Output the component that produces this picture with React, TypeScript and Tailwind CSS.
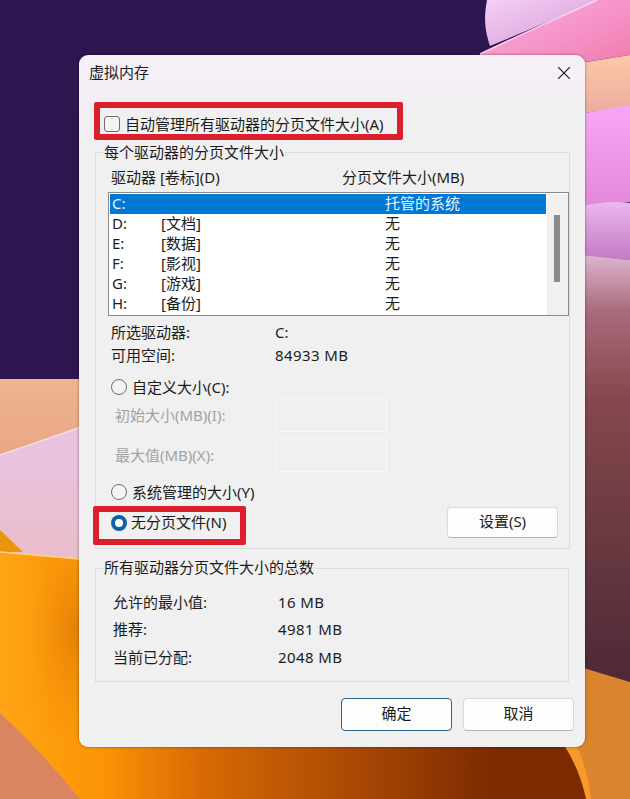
function Wallpaper() {
  return (
    <svg className="absolute inset-0" width="630" height="799" viewBox="0 0 630 799">
      <defs>
        <linearGradient id="peach" x1="0" y1="0" x2="0" y2="1">
          <stop offset="0" stopColor="#f0b48e" />
          <stop offset="1" stopColor="#df9078" />
        </linearGradient>
        <linearGradient id="lav" x1="0" y1="0" x2="0" y2="1">
          <stop offset="0" stopColor="#e8c4e4" />
          <stop offset="1" stopColor="#eabcc8" />
        </linearGradient>
        <linearGradient id="orange" x1="0" y1="0" x2="1" y2="0">
          <stop offset="0" stopColor="#ffa416" />
          <stop offset="0.16" stopColor="#fb9505" />
          <stop offset="0.32" stopColor="#d86a04" />
          <stop offset="0.555" stopColor="#ab4a05" />
          <stop offset="0.78" stopColor="#7c2b00" />
          <stop offset="1" stopColor="#7c2b00" />
        </linearGradient>
        <radialGradient id="orangeL" cx="0.9" cy="0.42" r="0.7">
          <stop offset="0" stopColor="#e27e06" stopOpacity="0.9" />
          <stop offset="1" stopColor="#fb9505" stopOpacity="0" />
        </radialGradient>
        <linearGradient id="petal" x1="0" y1="0" x2="1" y2="1">
          <stop offset="0" stopColor="#f4d0f4" />
          <stop offset="1" stopColor="#d596d8" />
        </linearGradient>
        <linearGradient id="pink" x1="0" y1="0" x2="1" y2="1">
          <stop offset="0" stopColor="#fbb0dc" />
          <stop offset="0.6" stopColor="#f590c4" />
          <stop offset="1" stopColor="#ee78a8" />
        </linearGradient>
        <linearGradient id="peachR" x1="0" y1="0" x2="0" y2="1">
          <stop offset="0" stopColor="#fcc9a8" />
          <stop offset="1" stopColor="#eeaaa0" />
        </linearGradient>
        <linearGradient id="magenta" x1="0" y1="0" x2="0" y2="1">
          <stop offset="0" stopColor="#f8a6f8" />
          <stop offset="1" stopColor="#e488d8" />
        </linearGradient>
        <linearGradient id="lilac" x1="0" y1="0" x2="0" y2="1">
          <stop offset="0" stopColor="#eab8ee" />
          <stop offset="1" stopColor="#c478c4" />
        </linearGradient>
        <linearGradient id="wine" x1="0" y1="0" x2="0" y2="1">
          <stop offset="0" stopColor="#dcb6d0" />
          <stop offset="0.13" stopColor="#a96a7c" />
          <stop offset="0.33" stopColor="#85484c" />
          <stop offset="1" stopColor="#4c2835" />
        </linearGradient>
      </defs>
      <rect width="630" height="799" fill="#2d1650" />
      <path d="M0 379H90V570H0Z" fill="url(#peach)" />
      <path d="M0 455L90 424V570H0Z" fill="url(#lav)" />
      <path d="M0 455L90 424" stroke="#f6dcdc" strokeWidth="1.5" />
      <path d="M0 530L23 552H0Z" fill="#e9950f" />
      <path d="M0 552L90 560H630V799H0Z" fill="url(#orange)" />
      <path d="M0 552L85 560V740H0Z" fill="url(#orangeL)" />
      <path d="M0 552L90 560" stroke="#fdd27a" strokeWidth="1.5" />
      <path d="M0 713Q40 750 80 799H0Z" fill="#d98560" />
      <path d="M487 0C483 20 486 35 490 46L600 0Z" fill="url(#petal)" />
      <path d="M480 54C530 30 565 15 597 0H630V55L585 62V70H480Z" fill="url(#pink)" />
      <path d="M480 54C530 30 565 15 597 0" fill="none" stroke="#fbd4ec" strokeWidth="1.5" />
      <path d="M580 63L630 55V106L580 114Z" fill="url(#peachR)" />
      <path d="M580 114L630 105V202L580 207Z" fill="url(#magenta)" />
      <path d="M580 207Q605 200 630 203V260L580 256Z" fill="url(#lilac)" />
      <path d="M580 255L630 260V690H580Z" fill="url(#wine)" />
      <path d="M570 664L630 682V799H588Q582 770 568 745Z" fill="#dc852f" />
      <path d="M564 745H576Q588 770 591 799H586Q580 770 564 745Z" fill="#f79a2c" />
    </svg>
  );
}

function RadioDot({ checked = false }: { checked?: boolean }) {
  if (checked) {
    return (
      <span className="flex h-4 w-4 shrink-0 items-center justify-center rounded-full bg-[#0f62a8]">
        <span className="h-2 w-2 rounded-full bg-white" />
      </span>
    );
  }
  return <span className="h-4 w-4 shrink-0 rounded-full border border-[#6e6e6e] bg-[#f4f4f4]" />;
}

const drives = [
  { letter: "D:", label: "[文档]" },
  { letter: "E:", label: "[数据]" },
  { letter: "F:", label: "[影视]" },
  { letter: "G:", label: "[游戏]" },
  { letter: "H:", label: "[备份]" },
];

export default function App() {
  return (
    <div className="relative h-[799px] w-[630px] overflow-hidden font-['Noto_Sans','Noto_Sans_CJK_SC',sans-serif] text-[15px] text-[#1c1c1c]">
      <Wallpaper />
      <div className="relative pl-[79px] pt-[55px]">
        <div className="flex h-[692px] w-[506px] flex-col rounded-[9px] bg-gradient-to-b from-[#f6eff6] from-[3%] to-[#f0f0f0] to-[9%] shadow-[0_0_3px_rgba(0,0,0,0.45)]">
          <div className="flex h-9 shrink-0 items-center justify-between pl-[10px] pr-[15px]">
            <span className="pb-[2px] leading-[30px]">虚拟内存</span>
            <svg width="12" height="12" viewBox="0 0 12 12" stroke="#1c1c1c" strokeWidth="1.2">
              <path d="M0 0L12 12M12 0L0 12" />
            </svg>
          </div>

          <label className="ml-[15px] mt-[11px] flex h-[38px] w-[309px] shrink-0 items-center rounded-[2px] border-[6px] border-[#dc1f2d] pl-1 pt-[6px]">
            <span className="h-4 w-4 shrink-0 rounded-[3px] border border-[#6e6e6e] bg-[#f4f4f4]" />
            <span className="ml-[5px] whitespace-nowrap">自动管理所有驱动器的分页文件大小(A)</span>
          </label>

          <fieldset className="ml-4 mt-px h-[408px] w-[474px] shrink-0 border border-[#dcdcdc]">
            <legend className="ml-[7px] px-px leading-[22px]">每个驱动器的分页文件大小</legend>
            <div className="flex pl-[15px] pt-1 leading-5">
              <span className="w-[231px]">驱动器 [卷标](D)</span>
              <span>分页文件大小(MB)</span>
            </div>

            <div className="ml-3 mt-[5px] flex h-[124px] w-[461px] border border-[#8a8a8a] bg-white pl-px pt-px">
              <div className="w-[436px] shrink-0 overflow-hidden">
                <div className="flex h-5 items-center bg-[#0078d4] pb-px pl-[2px] text-[#e6f3ff]">
                  <span className="w-[49px]">C:</span>
                  <span className="w-[224px]" />
                  <span>托管的系统</span>
                </div>
                {drives.map((d) => (
                  <div key={d.letter} className="flex h-5 items-center pb-px pl-[2px]">
                    <span className="w-[49px]">{d.letter}</span>
                    <span className="w-[224px]">{d.label}</span>
                    <span>无</span>
                  </div>
                ))}
              </div>
              <div className="ml-px flex-1 bg-[#f0f0f0] pl-[7px] pt-[21px]">
                <div className="h-[67px] w-[6px] bg-[#8c8c8c]" />
              </div>
            </div>

            <div className="mt-[5px] grid grid-cols-[164px_1fr] pl-[15px] leading-[23px]">
              <span>所选驱动器:</span>
              <span>C:</span>
              <span>可用空间:</span>
              <span className="tracking-[0.4px]">84933 MB</span>
            </div>

            <div className="ml-[15px] mt-[10px] flex h-5 items-center gap-[5px]">
              <RadioDot />
              <span>自定义大小(C):</span>
            </div>
            <div className="ml-[19px] mt-px flex h-[34px] items-center text-[#a3a3a3]">
              <span className="w-[161px]">初始大小(MB)(I):</span>
              <div className="h-[34px] w-[111px] border border-[#f8f8f8]" />
            </div>
            <div className="ml-[19px] mt-[6px] flex h-[34px] items-center text-[#a3a3a3]">
              <span className="w-[161px]">最大值(MB)(X):</span>
              <div className="h-[34px] w-[111px] border border-[#f8f8f8]" />
            </div>
            <div className="ml-[15px] mt-[10px] flex h-5 items-center gap-[5px]">
              <RadioDot />
              <span>系统管理的大小(Y)</span>
            </div>

            <div className="mt-1 flex items-start justify-between pr-[11px]">
              <div className="-ml-[3px] flex h-[39px] w-[153px] items-center gap-1 rounded-[2px] border-[6px] border-[#dc1f2d] pb-[6px] pl-3">
                <RadioDot checked />
                <span className="whitespace-nowrap">无分页文件(N)</span>
              </div>
              <button className="mt-px h-[31px] w-[111px] rounded-[4px] border border-[#dadada] border-b-[#b4b4b4] bg-[#fdfdfd] pb-[2px]">
                设置(S)
              </button>
            </div>
          </fieldset>

          <fieldset className="ml-4 mt-2 h-[125px] w-[474px] shrink-0 border border-[#dcdcdc]">
            <legend className="ml-[7px] h-[22px] px-px leading-5">所有驱动器分页文件大小的总数</legend>
            <div className="grid auto-rows-[27.5px] grid-cols-[165px_1fr] items-center pl-[17px] pt-[9px]">
              <span>允许的最小值:</span>
              <span className="tracking-[0.4px]">16 MB</span>
              <span>推荐:</span>
              <span className="tracking-[0.4px]">4981 MB</span>
              <span>当前已分配:</span>
              <span className="tracking-[0.4px]">2048 MB</span>
            </div>
          </fieldset>

          <div className="mt-4 flex justify-end gap-[11px] pr-[11px]">
            <button className="h-[33px] w-[111px] rounded-[4px] border border-[#2f6488] bg-[#fdfdfd] pb-[2px]">确定</button>
            <button className="h-[33px] w-[111px] rounded-[4px] border border-[#dadada] border-b-[#b4b4b4] bg-[#fdfdfd] pb-[2px]">取消</button>
          </div>
        </div>
      </div>
    </div>
  );
}
